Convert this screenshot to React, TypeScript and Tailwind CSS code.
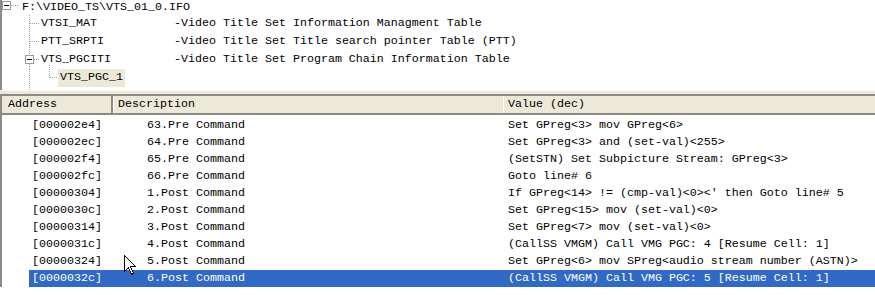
import React from 'react';

const MONO = 'font-["Liberation_Mono","Courier_New",monospace] text-[11.67px] leading-none';

const rows = [
  { addr: '[000002e4]', desc: '63.Pre Command', value: 'Set GPreg<3> mov GPreg<6>' },
  { addr: '[000002ec]', desc: '64.Pre Command', value: 'Set GPreg<3> and (set-val)<255>' },
  { addr: '[000002f4]', desc: '65.Pre Command', value: '(SetSTN) Set Subpicture Stream: GPreg<3>' },
  { addr: '[000002fc]', desc: '66.Pre Command', value: 'Goto line# 6' },
  { addr: '[00000304]', desc: '1.Post Command', value: "If GPreg<14> != (cmp-val)<0><' then Goto line# 5" },
  { addr: '[0000030c]', desc: '2.Post Command', value: 'Set GPreg<15> mov (set-val)<0>' },
  { addr: '[00000314]', desc: '3.Post Command', value: 'Set GPreg<7> mov (set-val)<0>' },
  { addr: '[0000031c]', desc: '4.Post Command', value: '(CallSS VMGM) Call VMG PGC: 4 [Resume Cell: 1]' },
  { addr: '[00000324]', desc: '5.Post Command', value: 'Set GPreg<6> mov SPreg<audio stream number (ASTN)>' },
  { addr: '[0000032c]', desc: '6.Post Command', value: '(CallSS VMGM) Call VMG PGC: 5 [Resume Cell: 1]', selected: true },
];

const dot = { stroke: '#a0a0a0', strokeDasharray: '1 1', shapeRendering: 'crispEdges' as const };

function Box({ x, y = 0 }: { x: number; y?: number }) {
  return (
    <g shapeRendering="crispEdges">
      <rect x={x + 0.5} y={y + 4.5} width={8} height={8} fill="#fff" stroke="#9a9a9a" />
      <line x1={x + 2} y1={y + 8.5} x2={x + 7} y2={y + 8.5} stroke="#000" />
    </g>
  );
}

function TreeRow({ gutter, children }: { gutter: React.ReactNode; children: React.ReactNode }) {
  return (
    <div className="flex h-[18px] items-center">
      {gutter}
      {children}
    </div>
  );
}

function Desc({ text }: { text: string }) {
  return <span className="whitespace-pre">{text}</span>;
}

function Cursor() {
  return (
    <svg className="absolute left-[124px] top-[255px]" width="13" height="21" viewBox="0 0 13 21">
      <path
        d="M0.5 0.5 L0.5 16.5 L4.5 12.5 L7.5 19.5 L9.5 18.5 L6.5 11.5 L11.5 11.5 Z"
        fill="#fff"
        stroke="#000"
        shapeRendering="crispEdges"
      />
    </svg>
  );
}

export default function App() {
  return (
    <div className={`relative h-[295px] w-[875px] overflow-hidden bg-white text-black ${MONO}`}>
      {/* tree panel */}
      <div className="h-[90px] overflow-hidden border-l-2 border-[#8c8a82] bg-white">
        {/* root row, its top scrolled out of view */}
        <div className="flex h-[15px] items-start">
          <svg width="20" height="15" className="shrink-0">
            <Box x={0} y={-3} />
            <line x1={9} y1={5.5} x2={17} y2={5.5} style={dot} />
          </svg>
          <span className="pt-[1px] leading-[13px]">F:\VIDEO_TS\VTS_01_0.IFO</span>
        </div>
        <TreeRow
          gutter={
            <svg width="39" height="18" className="shrink-0">
              <line x1={27.5} y1={0} x2={27.5} y2={18} style={dot} />
              <line x1={28} y1={8.5} x2={37} y2={8.5} style={dot} />
            </svg>
          }>
          <span className="w-[133px] shrink-0">VTSI_MAT</span>
          <Desc text="-Video Title Set Information Managment Table" />
        </TreeRow>
        <TreeRow
          gutter={
            <svg width="39" height="18" className="shrink-0">
              <line x1={27.5} y1={0} x2={27.5} y2={18} style={dot} />
              <line x1={28} y1={8.5} x2={37} y2={8.5} style={dot} />
            </svg>
          }>
          <span className="w-[133px] shrink-0">PTT_SRPTI</span>
          <Desc text="-Video Title Set Title search pointer Table (PTT)" />
        </TreeRow>
        <TreeRow
          gutter={
            <svg width="50" height="18" className="shrink-0 -mr-[11px]">
              <line x1={27.5} y1={0} x2={27.5} y2={4} style={dot} />
              <line x1={27.5} y1={13} x2={27.5} y2={18} style={dot} />
              <Box x={23} />
              <line x1={32} y1={8.5} x2={37} y2={8.5} style={dot} />
              <line x1={47.5} y1={14} x2={47.5} y2={18} style={dot} />
            </svg>
          }>
          <span className="w-[133px] shrink-0">VTS_PGCITI</span>
          <Desc text="-Video Title Set Program Chain Information Table" />
        </TreeRow>
        <TreeRow
          gutter={
            <svg width="56" height="18" className="shrink-0">
              <line x1={27.5} y1={0} x2={27.5} y2={18} style={dot} />
              <line x1={47.5} y1={0} x2={47.5} y2={9} style={dot} />
              <line x1={48} y1={8.5} x2={56} y2={8.5} style={dot} />
            </svg>
          }>
          <span className="flex h-[18px] items-center bg-[#ece9d8] px-[2px]">VTS_PGC_1</span>
        </TreeRow>
        <TreeRow
          gutter={
            <svg width="39" height="18" className="shrink-0">
              <line x1={27.5} y1={0} x2={27.5} y2={18} style={dot} />
            </svg>
          }>
          <span />
        </TreeRow>
      </div>

      {/* splitter */}
      <div className="h-[4px] border-t border-[#fbfaf6] bg-[#ece9d8]" />

      {/* list view */}
      <div className="border-l-2 border-t-2 border-[#8c8a82]">
        <div className="flex h-[19px] border-b-2 border-[#8c8a82] bg-[#ece9d8]">
          <div className="flex w-[111px] shrink-0 items-center border-r-2 border-r-[#8c8a82] pl-[6px]">Address</div>
          <div className="flex w-[390px] shrink-0 items-center border-l border-white pl-[4px]">Description</div>
          <div className="flex flex-1 items-center border-l border-white pl-[4px]">Value (dec)</div>
        </div>
        <div className="pt-[2px]">
          {rows.map((r) => (
            <div key={r.addr} className="flex h-[17px]">
              <div className="w-[27px] shrink-0" />
              <div
                className={`flex flex-1 items-center whitespace-pre ${
                  r.selected ? 'bg-[#316ac5] text-white' : ''
                }`}>
                <span className="w-[84px] shrink-0 pl-[3px]">{r.addr}</span>
                <span className="w-[390px] shrink-0 pl-[34px]">{r.desc}</span>
                <span className="pl-[5px]">{r.value}</span>
              </div>
            </div>
          ))}
        </div>
      </div>

      <Cursor />
    </div>
  );
}
